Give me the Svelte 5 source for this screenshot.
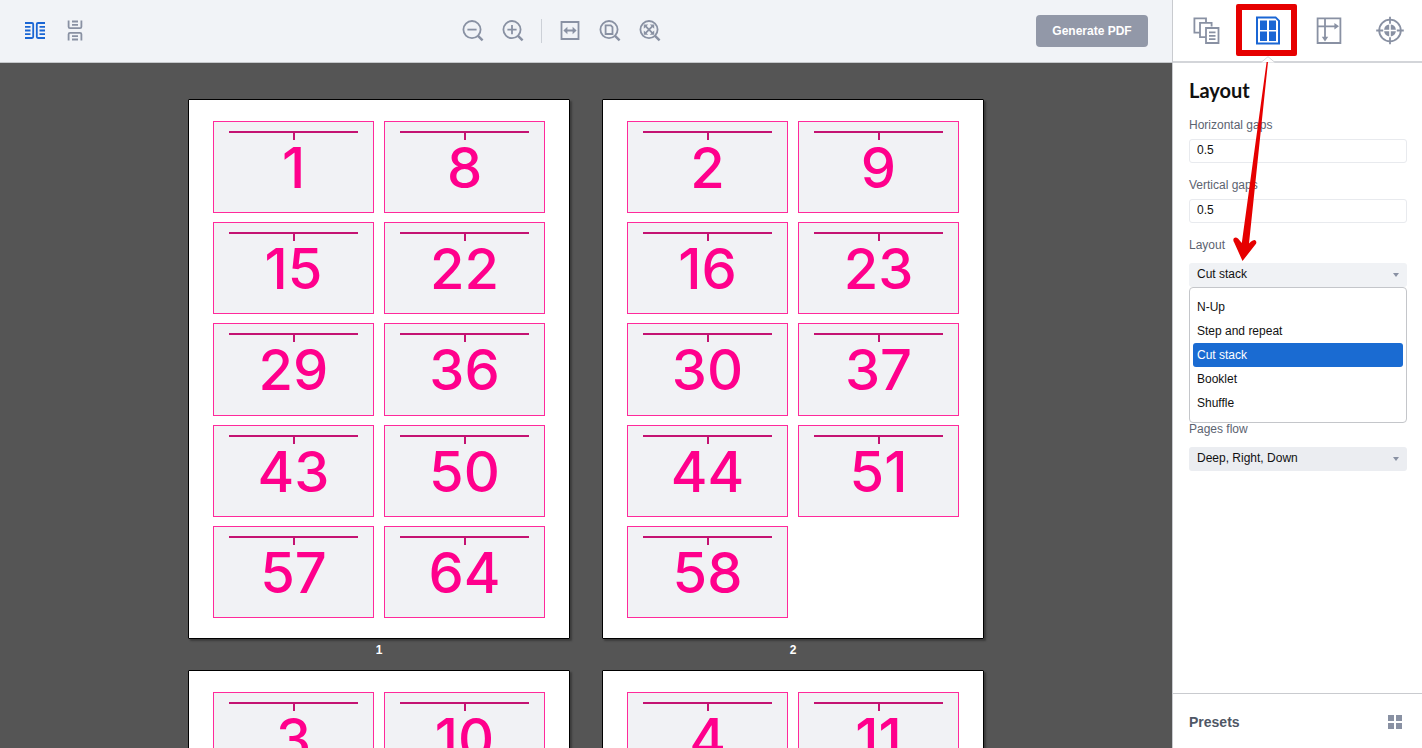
<script>
  const sheets = [
    { number: 1, pages: [1, 8, 15, 22, 29, 36, 43, 50, 57, 64] },
    { number: 2, pages: [2, 9, 16, 23, 30, 37, 44, 51, 58] },
    { number: 3, pages: [3, 10, 17, 24, 31, 38, 45, 52, 59] },
    { number: 4, pages: [4, 11, 18, 25, 32, 39, 46, 53, 60] },
  ];

  const layouts = ["N-Up", "Step and repeat", "Cut stack", "Booklet", "Shuffle"];
  const tabs = ["pages", "layout", "sheet", "marks"];

  let view = $state("spread");
  let activeTab = $state("layout");
  let horizontalGaps = $state("0.5");
  let verticalGaps = $state("0.5");
  let layout = $state("Cut stack");
  let flow = $state("Deep, Right, Down");
</script>

{#snippet magnifier()}
  <circle cx="10" cy="9.6" r="8.6" />
  <path d="M16 15.8 L20.6 20.4" stroke-width="2.4" />
{/snippet}

<div class="app">
  <main class="workspace">
    <header class="toolbar">
      <div class="group">
        <button
          class="tool"
          class:active={view === "spread"}
          aria-label="Side by side"
          onclick={() => (view = "spread")}
        >
          <svg width="22" height="22" viewBox="0 0 22 22">
            <path
              d="M1 3h7q1.2 0 1.2 1.2V16.8q0 1.2-1.2 1.2H1M1 6.8h5.5M1 10.5h5.5M1 14.2h5.5M21 3h-7q-1.2 0-1.2 1.2V16.8q0 1.2 1.2 1.2H21M21 6.8h-5.5M21 10.5h-5.5M21 14.2h-5.5"
            />
          </svg>
        </button>
        <button
          class="tool"
          class:active={view === "stack"}
          aria-label="One column"
          onclick={() => (view = "stack")}
        >
          <svg width="22" height="22" viewBox="0 0 22 22">
            <path
              d="M4.6.5v6.3q0 1.4 1.4 1.4h10q1.4 0 1.4-1.4V.5M8 1.5h6M8 4.8h6M4.6 20.5v-6.3q0-1.4 1.4-1.4h10q1.4 0 1.4 1.4v6.3M8 19.5h6M8 16.2h6"
            />
          </svg>
        </button>
      </div>

      <div class="group">
        <button class="tool" aria-label="Zoom out">
          <svg width="22" height="22" viewBox="0 0 22 22">
            {@render magnifier()}
            <path d="M5.4 9.6h9.2" />
          </svg>
        </button>
        <button class="tool" aria-label="Zoom in">
          <svg width="22" height="22" viewBox="0 0 22 22">
            {@render magnifier()}
            <path d="M5.4 9.6h9.2M10 5v9.2" />
          </svg>
        </button>
        <span class="divider"></span>
        <button class="tool" aria-label="Fit width">
          <svg width="22" height="22" viewBox="0 0 22 22">
            <path d="M2.5 2h17v17h-17zM6 10.5h10" />
            <path class="fill" d="M4.4 10.5l4-3.7v7.4zM17.6 10.5l-4-3.7v7.4z" />
          </svg>
        </button>
        <button class="tool" aria-label="Fit page">
          <svg width="22" height="22" viewBox="0 0 22 22">
            {@render magnifier()}
            <path d="M6.6 5.4h5.2l1.7 1.7v6.9H6.6z" />
          </svg>
        </button>
        <button class="tool" aria-label="Fit all">
          <svg width="22" height="22" viewBox="0 0 22 22">
            {@render magnifier()}
            <path d="M6 5.6l8 8M14 5.6l-8 8" />
            <path
              class="fill"
              d="M4.8 4.4h4.4l-4.4 4.4zM15.2 4.4v4.4l-4.4-4.4zM4.8 14.8v-4.4l4.4 4.4zM15.2 14.8h-4.4l4.4-4.4z"
            />
          </svg>
        </button>
      </div>

      <button class="generate">Generate PDF</button>
    </header>

    <section class="canvas" aria-label="Preview">
      <div class="sheets">
        {#each sheets as sheet (sheet.number)}
          <figure>
            <div class="sheet">
              {#each sheet.pages as page (page)}
                <div class="page">
                  <span class="rule"></span>
                  <span class="number">{page}</span>
                </div>
              {/each}
            </div>
            <figcaption>{sheet.number}</figcaption>
          </figure>
        {/each}
      </div>
    </section>
  </main>

  <aside class="sidebar">
    <nav class="tabs">
      {#each tabs as tab (tab)}
        <button
          class="tab"
          class:active={activeTab === tab}
          aria-label={tab}
          onclick={() => (activeTab = tab)}
        >
          <svg width="30" height="30" viewBox="0 0 30 30">
            {#if tab === "pages"}
              <path
                d="M7.6 16.6H2.4V2.4h11.6v3.8M13.4 21.2H8V6.9h11.6v3.6M14 12h12.5v15H14z"
              />
              <path d="M17 16.4h6.5M17 19.8h6.5M17 23.2h6.5" />
            {:else if tab === "layout"}
              <path d="M4 1.4h18.6l3.4 3.4v22.8H4z" stroke-width="2" />
              <path
                class="fill"
                d="M7 4.6h7v9.3H7zM16 4.6h7v9.3h-7zM7 15.6h7v9.3H7zM16 15.6h7v9.3h-7z"
              />
            {:else if tab === "sheet"}
              <path d="M3.6 2.4h22.8v24.6H3.6zM3.6 10.3h18M11 2.4v19" />
              <path class="fill" d="M25 10.3l-4.6-3.2v6.4zM11 25.4l-3.2-4.6h6.4z" />
            {:else}
              <circle cx="15" cy="14.5" r="10.8" />
              <path d="M15 .8v7M15 21.2v7M1.2 14.5h7M21.8 14.5h7" />
              <path
                class="fill"
                d="M14.2 8.6v5.1H9.1q.6-4.5 5.1-5.1zM15.8 8.6v5.1h5.1q-.6-4.5-5.1-5.1zM14.2 20.4v-5.1H9.1q.6 4.5 5.1 5.1zM15.8 20.4v-5.1h5.1q-.6 4.5-5.1 5.1z"
              />
            {/if}
          </svg>

          {#if tab === "layout"}
            <span class="highlight"></span>
            <svg class="notch" width="14" height="7" viewBox="0 0 14 7">
              <path d="M0 6.5L7 .7L14 6.5" />
            </svg>
            <svg class="arrow" width="60" height="204" viewBox="0 0 60 204">
              <path
                d="M43 1L41.6 1L16.8 182L13 177.4Q10.6 175.6 8.9 177.2Q7.6 179 9.2 181.4L17.5 200L31 182.8Q32 180.4 30.2 179.2Q28.4 178.6 24 182.4Z"
              />
            </svg>
          {/if}
        </button>
      {/each}
    </nav>

    <div class="panel">
      <h2>Layout</h2>

      <label for="hgaps">Horizontal gaps</label>
      <input id="hgaps" type="text" bind:value={horizontalGaps} />

      <label for="vgaps">Vertical gaps</label>
      <input id="vgaps" type="text" bind:value={verticalGaps} />

      <label for="layout">Layout</label>
      <div class="select">
        <select id="layout" bind:value={layout}>
          {#each layouts as name (name)}
            <option>{name}</option>
          {/each}
        </select>
      </div>
      <div class="options" role="listbox" aria-label="Layout">
        {#each layouts as name (name)}
          <button
            role="option"
            aria-selected={layout === name}
            class:selected={layout === name}
            onclick={() => (layout = name)}
          >
            {name}
          </button>
        {/each}
      </div>

      <label for="flow">Pages flow</label>
      <div class="select flow">
        <select id="flow" bind:value={flow}>
          <option>Deep, Right, Down</option>
          <option>Deep, Down, Right</option>
        </select>
      </div>
    </div>

    <footer>
      <h3>Presets</h3>
      <button class="presets" aria-label="Show presets">
        <svg width="14" height="14" viewBox="0 0 14 14">
          <path
            class="fill"
            d="M0 0h6v6H0zM8 0h6v6H8zM0 8h6v6H0zM8 8h6v6H8z"
          />
        </svg>
      </button>
    </footer>
  </aside>
</div>

<style>
  :global(body) {
    margin: 0;
    overflow: hidden;
  }

  .app {
    display: grid;
    grid-template-columns: minmax(0, 1fr) 250px;
    height: 100vh;
    font-family: "Liberation Sans", Arial, sans-serif;
    font-size: 12px;
    color: #111;
  }

  .app,
  .app * {
    box-sizing: border-box;
  }

  button {
    margin: 0;
    padding: 0;
    border: 0;
    background: none;
    font: inherit;
    color: inherit;
    cursor: pointer;
  }

  svg {
    display: block;
    fill: none;
    stroke: currentColor;
    stroke-width: 1.8;
  }

  .fill {
    fill: currentColor;
    stroke: none;
  }

  .workspace {
    display: flex;
    flex-direction: column;
    min-height: 0;
  }

  .toolbar {
    display: flex;
    flex: none;
    align-items: center;
    justify-content: space-between;
    height: 63px;
    padding: 0 24px;
    background: #f1f3f7;
    border-bottom: 1px solid #c5c8cb;
  }

  .group {
    display: flex;
    align-items: center;
    gap: 18px;
  }

  .tool {
    color: #8991a3;
  }

  .tool.active {
    color: #1a66d4;
  }

  .divider {
    width: 1px;
    height: 24px;
    margin: 0 -1px;
    background: #ccd0d7;
  }

  .generate {
    width: 112px;
    height: 32px;
    padding-bottom: 1px;
    border-radius: 4px;
    background: #9298a8;
    color: #fff;
    font-weight: 700;
  }

  .canvas {
    flex: 1;
    min-height: 0;
    overflow: auto;
    background: #555;
    scrollbar-width: none;
  }

  .sheets {
    display: grid;
    grid-template-columns: repeat(2, 382px);
    justify-content: center;
    column-gap: 32px;
    padding-top: 36px;
  }

  figure {
    margin: 0;
  }

  .sheet {
    display: grid;
    grid-template-columns: 1fr 1fr;
    grid-template-rows: repeat(5, 1fr);
    gap: 9px 10px;
    height: 540px;
    padding: 21px 24px 20px;
    border: 1px solid #000;
    border-radius: 1px;
    background: #fff;
    box-shadow: 2px 2px 2px rgba(0, 0, 0, 0.3);
  }

  .page {
    display: flex;
    flex-direction: column;
    align-items: center;
    padding: 9px 15px 0;
    border: 1px solid #ff2a9b;
    background: #f1f2f5;
  }

  .rule {
    display: flex;
    justify-content: center;
    align-self: stretch;
    height: 9px;
    border-top: 2px solid #c41372;
  }

  .rule::after {
    content: "";
    width: 2px;
    background: #c41372;
  }

  .number {
    font-family: Inter, sans-serif;
    font-size: 56px;
    font-weight: 500;
    line-height: 56px;
    color: #ff008c;
  }

  figcaption {
    height: 31px;
    color: #fff;
    font-weight: 700;
    line-height: 22px;
    text-align: center;
  }

  .sidebar {
    display: flex;
    flex-direction: column;
    border-left: 1px solid #c9cbcf;
    background: #fff;
  }

  .tabs {
    display: grid;
    flex: none;
    grid-template-columns: repeat(4, 1fr);
    height: 63px;
    padding: 0 2px 0 3px;
    border-bottom: 2px solid #d3d5d9;
  }

  .tab {
    position: relative;
    display: grid;
    place-items: center;
    color: #8991a3;
  }

  .tab.active {
    color: #1a66d4;
  }

  .highlight {
    position: absolute;
    top: 4px;
    left: -1px;
    width: 61px;
    height: 52px;
    border: 6px solid #e60000;
    border-radius: 2px;
  }

  .notch {
    position: absolute;
    bottom: -2px;
    left: 24px;
    fill: #fff;
    stroke: #d3d5d9;
    stroke-width: 1;
  }

  .arrow {
    position: absolute;
    z-index: 2;
    top: 61px;
    left: -12px;
    fill: #e60000;
    stroke: none;
    pointer-events: none;
  }

  .panel {
    display: flex;
    flex: 1;
    flex-direction: column;
    padding: 16px 15px 0 16px;
  }

  h2 {
    margin: 0 0 11px;
    font-family: Lato, sans-serif;
    font-size: 20px;
    font-weight: 700;
    line-height: 22px;
  }

  label {
    padding-top: 4px;
    color: #5c6370;
    line-height: 18px;
  }

  input {
    height: 24px;
    margin: 5px 0 9px;
    padding: 0 7px 2px;
    border: 1px solid #e8eaee;
    border-radius: 3px;
    background: #fff;
    color: #111;
    font: inherit;
  }

  .select {
    position: relative;
    margin-top: 9px;
  }

  .select::after {
    content: "";
    position: absolute;
    top: 10px;
    right: 8px;
    border: 3px solid transparent;
    border-top: 4px solid #8991a3;
    border-bottom: 0;
    pointer-events: none;
  }

  select {
    display: block;
    width: 100%;
    height: 24px;
    padding: 0 8px 2px;
    appearance: none;
    border: 0;
    border-radius: 3px;
    background: #f0f2f5;
    color: #111;
    font: inherit;
  }

  .flow select {
    background: #ebedf1;
  }

  .options {
    display: flex;
    flex-direction: column;
    margin-bottom: -7px;
    padding: 7px 3px;
    border: 1px solid #c4c6ca;
    border-radius: 4px;
    background: #fff;
  }

  .options button {
    height: 24px;
    padding: 0 4px 1px;
    border-radius: 3px;
    text-align: left;
  }

  .options .selected {
    background: #1a6bd2;
    color: #fff;
  }

  footer {
    display: flex;
    flex: none;
    align-items: center;
    justify-content: space-between;
    height: 55px;
    padding: 2px 20px 0 16px;
    border-top: 1px solid #c9cbcf;
  }

  h3 {
    margin: 0;
    color: #4f5766;
    font-size: 14px;
    line-height: 18px;
  }

  .presets {
    color: #8991a3;
  }
</style>
